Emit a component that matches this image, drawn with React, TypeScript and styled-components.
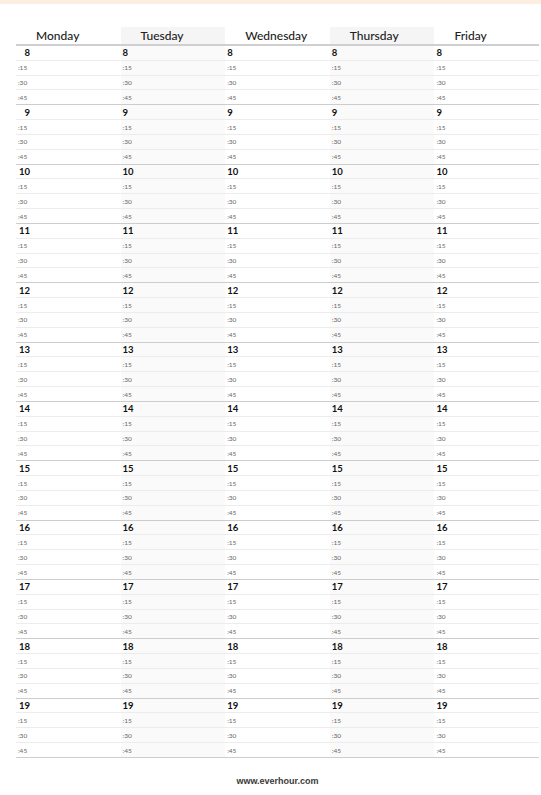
import styled, { createGlobalStyle } from "styled-components";

const days = ["Monday", "Tuesday", "Wednesday", "Thursday", "Friday"];
const hours = [8, 9, 10, 11, 12, 13, 14, 15, 16, 17, 18, 19];
const minutes = [":15", ":30", ":45"];

const GlobalStyle = createGlobalStyle`
    html, body {
        margin: 0;
        padding: 0;
        background: #ffffff;
    }

    body {
        font-family: Lato, "Open Sans", sans-serif;
        color: #1f1f1f;
    }
`;

export default function App() {
    return (
        <>
            <GlobalStyle />
            <Page>
                <TopBand />
                <Table>
                    {days.map((day, i) => (
                        <Column key={day} $shaded={i % 2 === 1}>
                            <HeaderCell $shaded={i % 2 === 1}>{day}</HeaderCell>
                            {hours.map((hour) => (
                                <HourBlock key={hour}>
                                    <Row>
                                        <HourLabel $padded={i === 0}>{hour}</HourLabel>
                                    </Row>
                                    {minutes.map((m) => (
                                        <MinuteRow key={m}>{m}</MinuteRow>
                                    ))}
                                </HourBlock>
                            ))}
                        </Column>
                    ))}
                </Table>
                <Footer>www.everhour.com</Footer>
            </Page>
        </>
    );
}

const Page = styled.div`
    width: 541px;
    min-height: 795px;
    display: flex;
    flex-direction: column;
`;

const TopBand = styled.div`
    height: 4px;
    background: #fcefe2;
`;

const Table = styled.div`
    display: grid;
    grid-template-columns: repeat(5, 1fr);
    margin: 23px 2px 0 16px;
`;

const Column = styled.div<{ $shaded: boolean }>`
    display: flex;
    flex-direction: column;
    background: ${({ $shaded }) => ($shaded ? "#fafafa" : "#ffffff")};
`;

const HeaderCell = styled.div<{ $shaded: boolean }>`
    box-sizing: border-box;
    height: 19px;
    padding-left: 20px;
    display: flex;
    align-items: center;
    font-size: 12px;
    font-weight: 500;
    color: #222;
    background: ${({ $shaded }) => ($shaded ? "#f5f5f5" : "#ffffff")};
    border-bottom: 2px solid #cfcfcf;
`;

const HourBlock = styled.div`
    box-sizing: border-box;
    height: 59.33px;
    display: flex;
    flex-direction: column;
    border-bottom: 1.5px solid #cdcdcd;
`;

const Row = styled.div`
    box-sizing: border-box;
    flex: 1;
    padding-left: 2px;
    display: flex;
    align-items: center;
    border-bottom: 1px solid #ececec;

    &:last-child {
        border-bottom: none;
    }
`;

const MinuteRow = styled(Row)`
    font-size: 6.5px;
    color: #666;
`;

const HourLabel = styled.span<{ $padded: boolean }>`
    font-size: 9.5px;
    font-weight: 700;
    color: #111;
    display: inline-block;
    width: ${({ $padded }) => ($padded ? "12px" : "auto")};
    text-align: ${({ $padded }) => ($padded ? "right" : "left")};
`;

const Footer = styled.div`
    margin: 18px 0 0 16px;
    width: 523px;
    text-align: center;
    font-family: "Liberation Sans", Arial, sans-serif;
    font-size: 9px;
    font-weight: 700;
    color: #3a3a3a;
`;
